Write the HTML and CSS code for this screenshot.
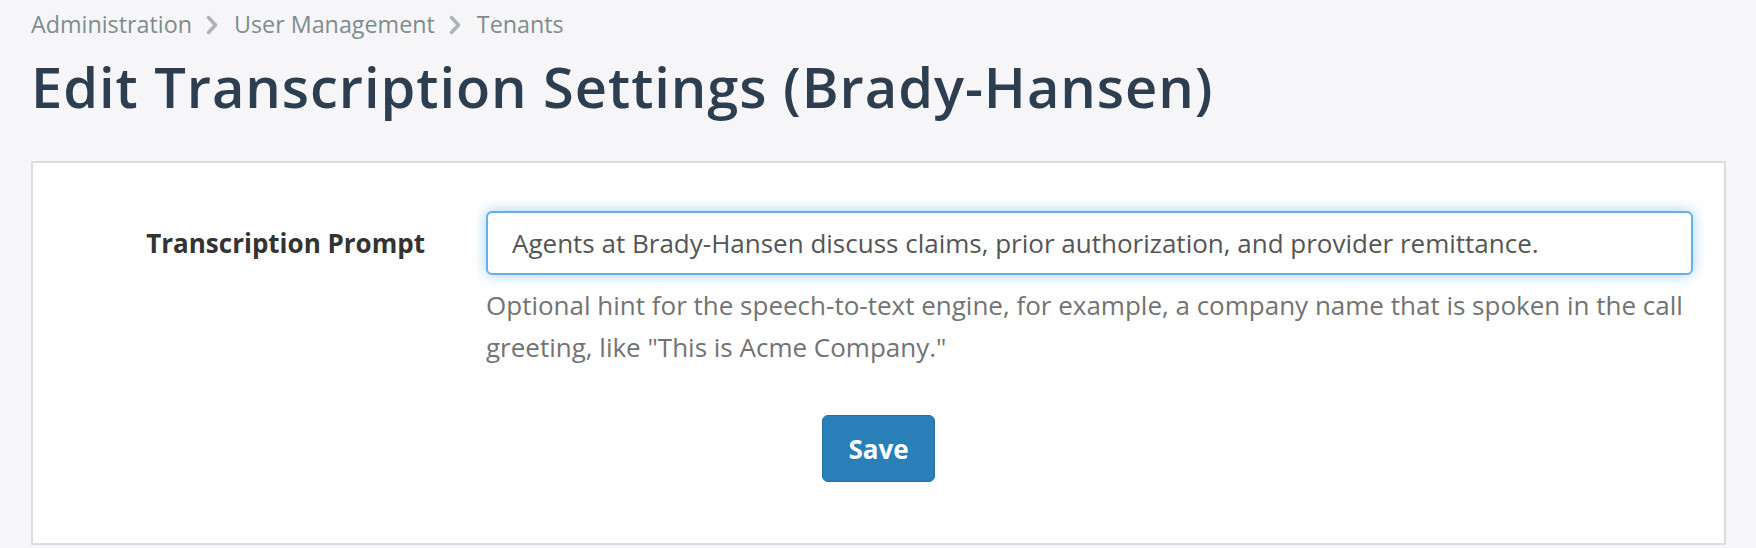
FILE: index.html
```html
<!DOCTYPE html>
<html lang="en">
<head>
<meta charset="utf-8">
<title>Edit Transcription Settings</title>
<link rel="stylesheet" href="styles.css">
</head>
<body>
<div class="page">
  <nav class="breadcrumb">
    <a class="crumb" href="#">Administration</a>
    <svg class="chev" viewBox="0 0 12 20" width="12" height="20"><polyline points="2.5,2.5 9.5,10 2.5,17.5" /></svg>
    <a class="crumb" href="#">User Management</a>
    <svg class="chev" viewBox="0 0 12 20" width="12" height="20"><polyline points="2.5,2.5 9.5,10 2.5,17.5" /></svg>
    <a class="crumb" href="#">Tenants</a>
  </nav>
  <h1 class="title">Edit Transcription Settings (Brady-Hansen)</h1>
  <section class="card">
    <form class="form">
      <label class="form-label" for="prompt">Transcription Prompt</label>
      <input class="form-input" id="prompt" type="text" value="Agents at Brady-Hansen discuss claims, prior authorization, and provider remittance.">
      <p class="form-help">Optional hint for the speech-to-text engine, for example, a company name that is spoken in the call greeting, like "This is Acme Company."</p>
      <div class="form-actions">
        <button class="btn-save" type="button">Save</button>
      </div>
    </form>
  </section>
</div>
</body>
</html>
```
FILE: styles.css
```css
* { box-sizing: border-box; }

html, body {
  margin: 0;
  padding: 0;
  background: #f6f6f8;
  font-family: "Open Sans", "Noto Sans", sans-serif;
}

.page {
  padding: 8px 30px 0 31px;
}

.breadcrumb {
  display: flex;
  align-items: center;
  gap: 14px;
  height: 33px;
  font-size: 23.3px;
  line-height: 33px;
}

.crumb {
  color: #7f8c8d;
  text-decoration: none;
}

.chev {
  display: block;
  margin-right: 2px;
  fill: none;
  stroke: #aeb3b8;
  stroke-width: 3.5;
  stroke-linecap: round;
  stroke-linejoin: round;
}

.title {
  margin: 12px 0 0 0;
  font-size: 56px;
  font-weight: 600;
  line-height: 1.2;
  letter-spacing: 0.95px;
  color: #2c3e50;
}

.card {
  margin-top: 41px;
  background: #ffffff;
  border: 2px solid #dddddd;
  padding: 48px 31px 61px 0;
}

.form {
  display: grid;
  grid-template-columns: 392px 1fr;
  column-gap: 61px;
}

.form-label {
  grid-column: 1;
  grid-row: 1;
  align-self: center;
  text-align: right;
  font-size: 26px;
  font-weight: 700;
  color: #333333;
}

.form-input {
  grid-column: 2;
  grid-row: 1;
  height: 64px;
  width: 100%;
  padding: 0 24px;
  border: 2px solid #66afe9;
  border-radius: 6px;
  font-family: inherit;
  font-size: 26px;
  color: #555555;
  background: #ffffff;
  outline: none;
  box-shadow: inset 0 1px 1px rgba(0, 0, 0, 0.05), 0 0 14px rgba(102, 175, 233, 0.6);
}

.form-help {
  grid-column: 2;
  grid-row: 2;
  margin: 9px 0 0 0;
  font-size: 26px;
  line-height: 42px;
  color: #737373;
}

.form-actions {
  grid-column: 1 / span 2;
  grid-row: 3;
  display: flex;
  justify-content: center;
  margin-top: 47px;
  padding-left: 31px;
}

.btn-save {
  height: 67px;
  padding: 0 25px;
  border: 1.5px solid #2270a4;
  border-radius: 6px;
  background: #2980b9;
  color: #ffffff;
  font-family: inherit;
  font-size: 26px;
  font-weight: 700;
  line-height: 36px;
  cursor: pointer;
}
```
